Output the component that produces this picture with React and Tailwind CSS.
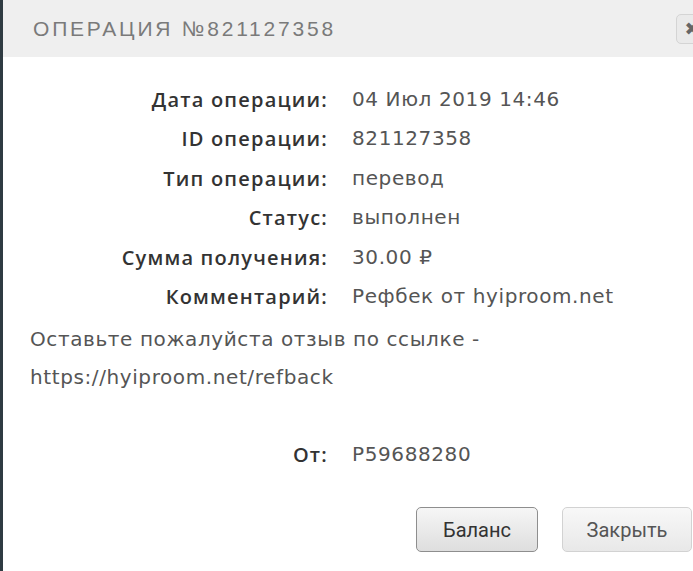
import React from "react";

const rows = [
  ["Дата операции:", "04 Июл 2019 14:46"],
  ["ID операции:", "821127358"],
  ["Тип операции:", "перевод"],
  ["Статус:", "выполнен"],
  ["Сумма получения:", "30.00 ₽"],
  ["Комментарий:", "Рефбек от hyiproom.net"],
];

export default function App() {
  return (
    <div className="w-[693px] h-[571px] overflow-hidden bg-white" style={{ fontFamily: '"DejaVu Sans", sans-serif' }}>
      <div className="w-[730px] h-[571px] border-l-[3px] border-[#2f3b42] bg-white flex flex-col">
        <div className="h-[57px] bg-[#efefef] flex items-center justify-between pl-[30px] pr-[22px]">
          <div className="text-[21px] tracking-[2.8px] text-[#7a7a7a]" style={{ fontFamily: '"Liberation Sans", sans-serif' }}>
            ОПЕРАЦИЯ №821127358
          </div>
          <div className="w-[32px] h-[30px] rounded-[5px] border border-[#d4d4d4] bg-[#eaeaea] flex items-center justify-center text-[#666] text-[18px] font-bold">
            ✖
          </div>
        </div>
        <div className="pl-[27px] pt-[23px] text-[20px] tracking-[0.6px]">
          <div className="grid grid-cols-[298px_1fr] gap-x-[24px]">
            {rows.map(([l, v]) => (
              <React.Fragment key={l}>
                <div className="text-right font-semibold text-[#333] h-[39.4px] leading-[39.4px] tracking-[1.2px]" style={{ fontFamily: '"Open Sans", sans-serif' }}>{l}</div>
                <div className="text-[#555] h-[39.4px] leading-[39.4px]">{v}</div>
              </React.Fragment>
            ))}
          </div>
          <div className="text-[#555] leading-[38px] mt-[4px]">
            Оставьте пожалуйста отзыв по ссылке -<br />
            https://hyiproom.net/refback
          </div>
          <div className="grid grid-cols-[298px_1fr] gap-x-[24px] mt-[39px]">
            <div className="text-right font-semibold text-[#333] leading-[39px] tracking-[1.2px]" style={{ fontFamily: '"Open Sans", sans-serif' }}>От:</div>
            <div className="text-[#555] leading-[39px]">P59688280</div>
          </div>
          <div className="flex pl-[386px] gap-[24px] mt-[33px] tracking-normal" style={{ fontFamily: '"Roboto", sans-serif' }}>
            <button className="w-[122px] h-[45px] rounded-[5px] border border-[#8e8e8e] bg-gradient-to-b from-[#f6f6f6] to-[#dedede] text-[#333] text-[20px]">
              Баланс
            </button>
            <button className="w-[130px] h-[45px] rounded-[5px] border border-[#d2d2d2] bg-gradient-to-b from-[#f8f8f8] to-[#e8e8e8] text-[#555] text-[20px]">
              Закрыть
            </button>
          </div>
        </div>
      </div>
    </div>
  );
}
